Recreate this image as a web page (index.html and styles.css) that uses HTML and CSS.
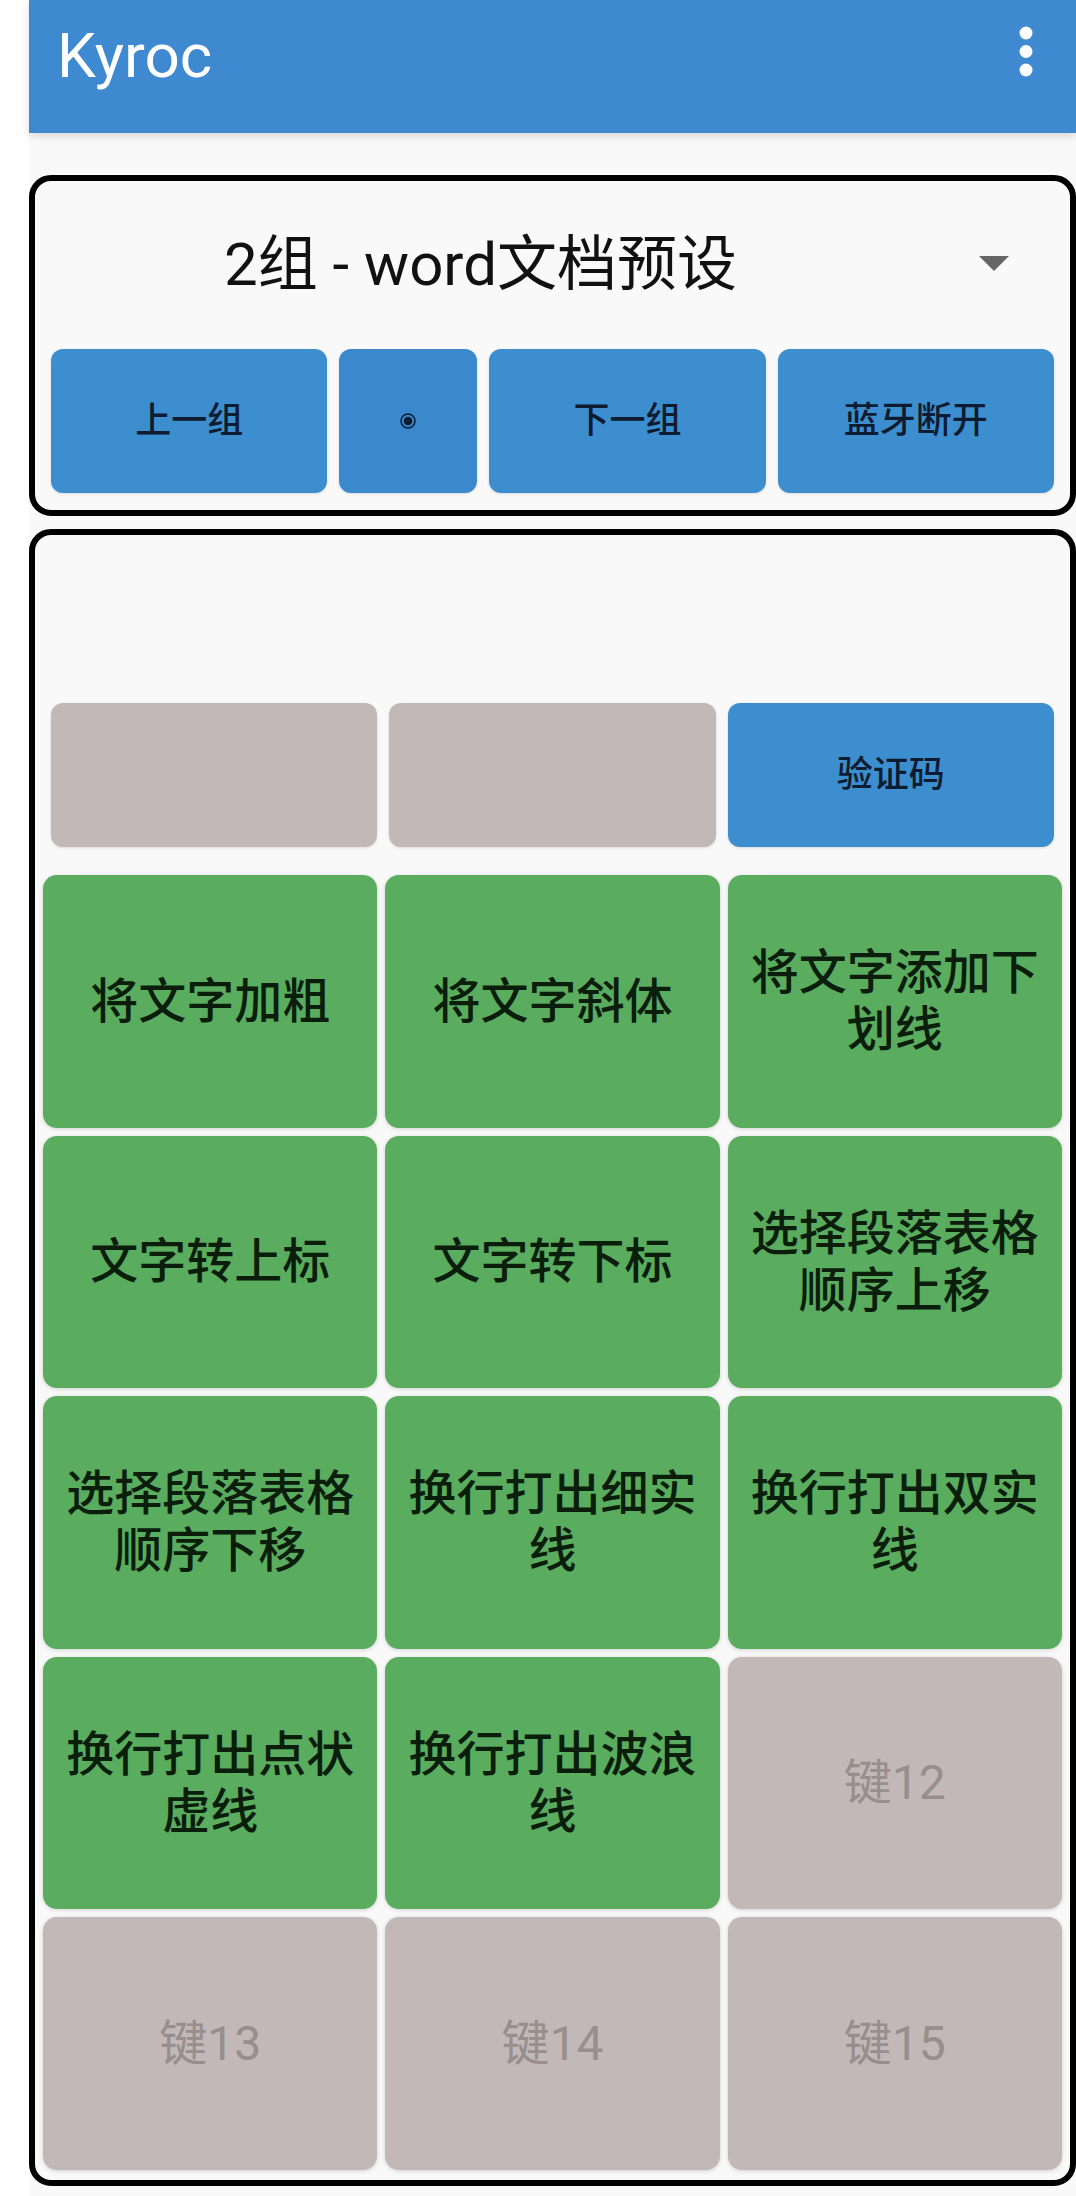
FILE: index.html
```html
<!DOCTYPE html>
<html lang="zh">
<head>
<meta charset="utf-8">
<title>Kyroc</title>
<link rel="stylesheet" href="styles.css">
</head>
<body>
<div class="screen">
  <header class="appbar">
    <div class="title">Kyroc</div>
    <svg class="more" width="14" height="52" viewBox="0 0 14 52" aria-hidden="true">
      <circle cx="7" cy="7" r="6.5" fill="#fff"/>
      <circle cx="7" cy="25.5" r="6.5" fill="#fff"/>
      <circle cx="7" cy="44" r="6.5" fill="#fff"/>
    </svg>
  </header>
  <main class="content">
    <section class="card card-top">
      <div class="dropdown">
        <span class="dd-text">2组 - word文档预设</span>
        <svg class="dd-arrow" width="30" height="15" viewBox="0 0 30 15" aria-hidden="true">
          <polygon points="0,0 30,0 15,15" fill="#666"/>
        </svg>
      </div>
      <div class="nav-row">
        <div class="btn btn-blue">上一组</div>
        <div class="btn btn-blue btn-pressed">
          <svg class="radio" width="18" height="18" viewBox="0 0 18 18" aria-hidden="true">
            <circle cx="9" cy="9" r="7" fill="none" stroke="#0d1c30" stroke-width="1.5"/>
            <circle cx="9" cy="9" r="4.3" fill="#0d1c30"/>
          </svg>
        </div>
        <div class="btn btn-blue">下一组</div>
        <div class="btn btn-blue">蓝牙断开</div>
      </div>
    </section>
    <section class="card card-keys">
      <div class="spacer"></div>
      <div class="fn-row">
        <div class="btn btn-grey"></div>
        <div class="btn btn-grey"></div>
        <div class="btn btn-blue">验证码</div>
      </div>
      <div class="key-grid">
        <div class="key key-on">将文字加粗</div>
        <div class="key key-on">将文字斜体</div>
        <div class="key key-on">将文字添加下划线</div>
        <div class="key key-on">文字转上标</div>
        <div class="key key-on">文字转下标</div>
        <div class="key key-on">选择段落表格顺序上移</div>
        <div class="key key-on">选择段落表格顺序下移</div>
        <div class="key key-on">换行打出细实线</div>
        <div class="key key-on">换行打出双实线</div>
        <div class="key key-on">换行打出点状虚线</div>
        <div class="key key-on">换行打出波浪线</div>
        <div class="key key-off">键12</div>
        <div class="key key-off">键13</div>
        <div class="key key-off">键14</div>
        <div class="key key-off">键15</div>
      </div>
    </section>
  </main>
</div>
</body>
</html>
```

FILE: styles.css
```css
* {
  box-sizing: border-box;
}

html, body {
  margin: 0;
  padding: 0;
  background: #ffffff;
}

body {
  font-family: Roboto, "Noto Sans CJK SC", sans-serif;
}

.screen {
  margin-left: 29px;
  width: 1047px;
  min-height: 2196px;
  background: #f9f9f9;
}

/* App bar */
.appbar {
  height: 133px;
  background: #3e89cf;
  display: flex;
  justify-content: space-between;
  align-items: flex-start;
  box-shadow: 0 3px 8px rgba(0, 0, 0, 0.14);
  position: relative;
  z-index: 1;
}

.title {
  color: #ffffff;
  font-family: Roboto, sans-serif;
  font-size: 62px;
  line-height: 62px;
  padding-top: 25px;
  padding-left: 28px;
}

.more {
  display: block;
  margin-top: 26px;
  margin-right: 43px;
}

/* Content */
.content {
  padding: 42px 0 0 0;
}

.card {
  border: 6px solid #000000;
  border-radius: 22px;
  background: #f9f9f9;
}

.card-top {
  margin-bottom: 13px;
}

.dropdown {
  height: 168px;
  display: flex;
  align-items: center;
  padding: 0 16px;
}

.dd-text {
  flex: 1;
  margin-right: 69px;
  text-align: center;
  font-size: 60px;
  line-height: 72px;
  color: #111111;
  white-space: nowrap;
}

.dd-arrow {
  display: block;
  margin-right: 45px;
  margin-top: -4px;
}

.nav-row {
  display: grid;
  grid-template-columns: 2fr 1fr 2fr 2fr;
  gap: 12px;
  padding: 0 16px 17px;
}

.btn {
  height: 144px;
  border-radius: 12px;
  display: flex;
  align-items: center;
  justify-content: center;
  font-size: 36px;
  font-weight: 500;
  line-height: 1;
  color: #0d1c30;
  box-shadow: 0 1px 3px rgba(0, 0, 0, 0.12);
}

.btn-blue {
  background: #3d8ece;
}

.btn-pressed {
  background: #3b88cc;
}

.btn-grey {
  background: #c2b8b7;
}

.radio {
  display: block;
}

/* Key card */
.card-keys {
  padding: 0 8px 10px;
}

.spacer {
  height: 168px;
}

.fn-row {
  display: grid;
  grid-template-columns: repeat(3, 1fr);
  gap: 12px;
  padding: 0 8px;
  margin-bottom: 28px;
}

.key-grid {
  display: grid;
  grid-template-columns: repeat(3, 1fr);
  grid-auto-rows: 252.5px;
  gap: 8px;
}

.key {
  border-radius: 14px;
  display: flex;
  align-items: center;
  justify-content: center;
  text-align: center;
  padding: 0 8px;
  font-size: 48px;
  font-weight: 500;
  line-height: 57px;
  box-shadow: 0 1px 4px rgba(0, 0, 0, 0.16);
}

.key-on {
  background: #5aac5f;
  color: #0b1e0b;
}

.key-off {
  background: #c2b8b7;
  color: #978e8d;
  font-weight: 400;
}
```
